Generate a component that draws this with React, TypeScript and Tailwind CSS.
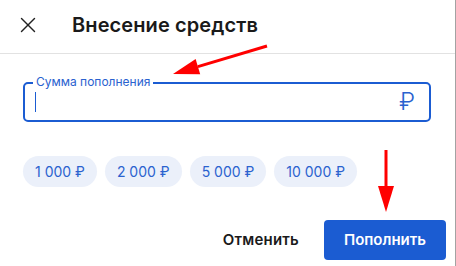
import { X } from "lucide-react";

const amounts = ["1 000 ₽", "2 000 ₽", "5 000 ₽", "10 000 ₽"];

function Arrow({ x1, y1, x2, y2 }: { x1: number; y1: number; x2: number; y2: number }) {
  const angle = Math.atan2(y2 - y1, x2 - x1);
  const len = 26;
  const half = 8;
  const bx = x2 - Math.cos(angle) * len;
  const by = y2 - Math.sin(angle) * len;
  const px = -Math.sin(angle) * half;
  const py = Math.cos(angle) * half;
  return (
    <g>
      <line x1={x1} y1={y1} x2={bx} y2={by} stroke="#ff0000" strokeWidth={3} />
      <polygon points={`${x2},${y2} ${bx + px},${by + py} ${bx - px},${by - py}`} fill="#ff0000" />
    </g>
  );
}

export default function App() {
  return (
    <div
      className="relative h-[266px] w-[456px] overflow-hidden border-r border-[#a3a3a3] bg-white"
      style={{ fontFamily: "Inter, 'Noto Sans', sans-serif" }}
    >
      <div className="flex h-[54px] items-center border-b border-[#e2e2e2] pb-[3px]">
        <div className="flex w-[72px] justify-center pr-[17px]">
          <X className="h-[26px] w-[26px] text-[#222]" strokeWidth={1.3} />
        </div>
        <h1 className="text-[20px] font-semibold tracking-[0.1px] text-[#1a1a1a]">Внесение средств</h1>
      </div>

      <div className="px-[23px] pt-[28px]">
        <div className="relative flex h-[40px] w-[408px] items-center justify-between rounded-[5px] border-2 border-[#1b5cd2] pl-[10px] pr-[14px]">
          <span className="absolute left-[8px] top-[-10px] bg-white px-[3px] text-[12px] leading-[16px] text-[#2a62cf]">
            Сумма пополнения
          </span>
          <span className="h-[20px] w-px bg-[#1b5cd2]" />
          <span className="text-[24px] font-light leading-none text-[#2a62cf]">₽</span>
        </div>

        <div className="mt-[34px] flex gap-[8px]">
          {amounts.map((amount) => (
            <button
              key={amount}
              className="h-[31px] rounded-full bg-[#ebf0fa] px-[12px] text-[14px] text-[#2a62cf]"
            >
              {amount}
            </button>
          ))}
        </div>
      </div>

      <div className="mt-[33px] flex items-center justify-end gap-[25px] pr-[9px]">
        <button className="text-[15px] font-semibold tracking-[0.2px] text-[#1a1a1a]">Отменить</button>
        <button className="h-[40px] w-[122px] rounded-[4px] bg-[#1b5cd2] text-[15px] font-semibold text-white">
          Пополнить
        </button>
      </div>

      <svg className="pointer-events-none absolute left-0 top-0" width={456} height={266}>
        <Arrow x1={267} y1={46} x2={173} y2={74} />
        <Arrow x1={386} y1={150} x2={386} y2={212} />
      </svg>
    </div>
  );
}
